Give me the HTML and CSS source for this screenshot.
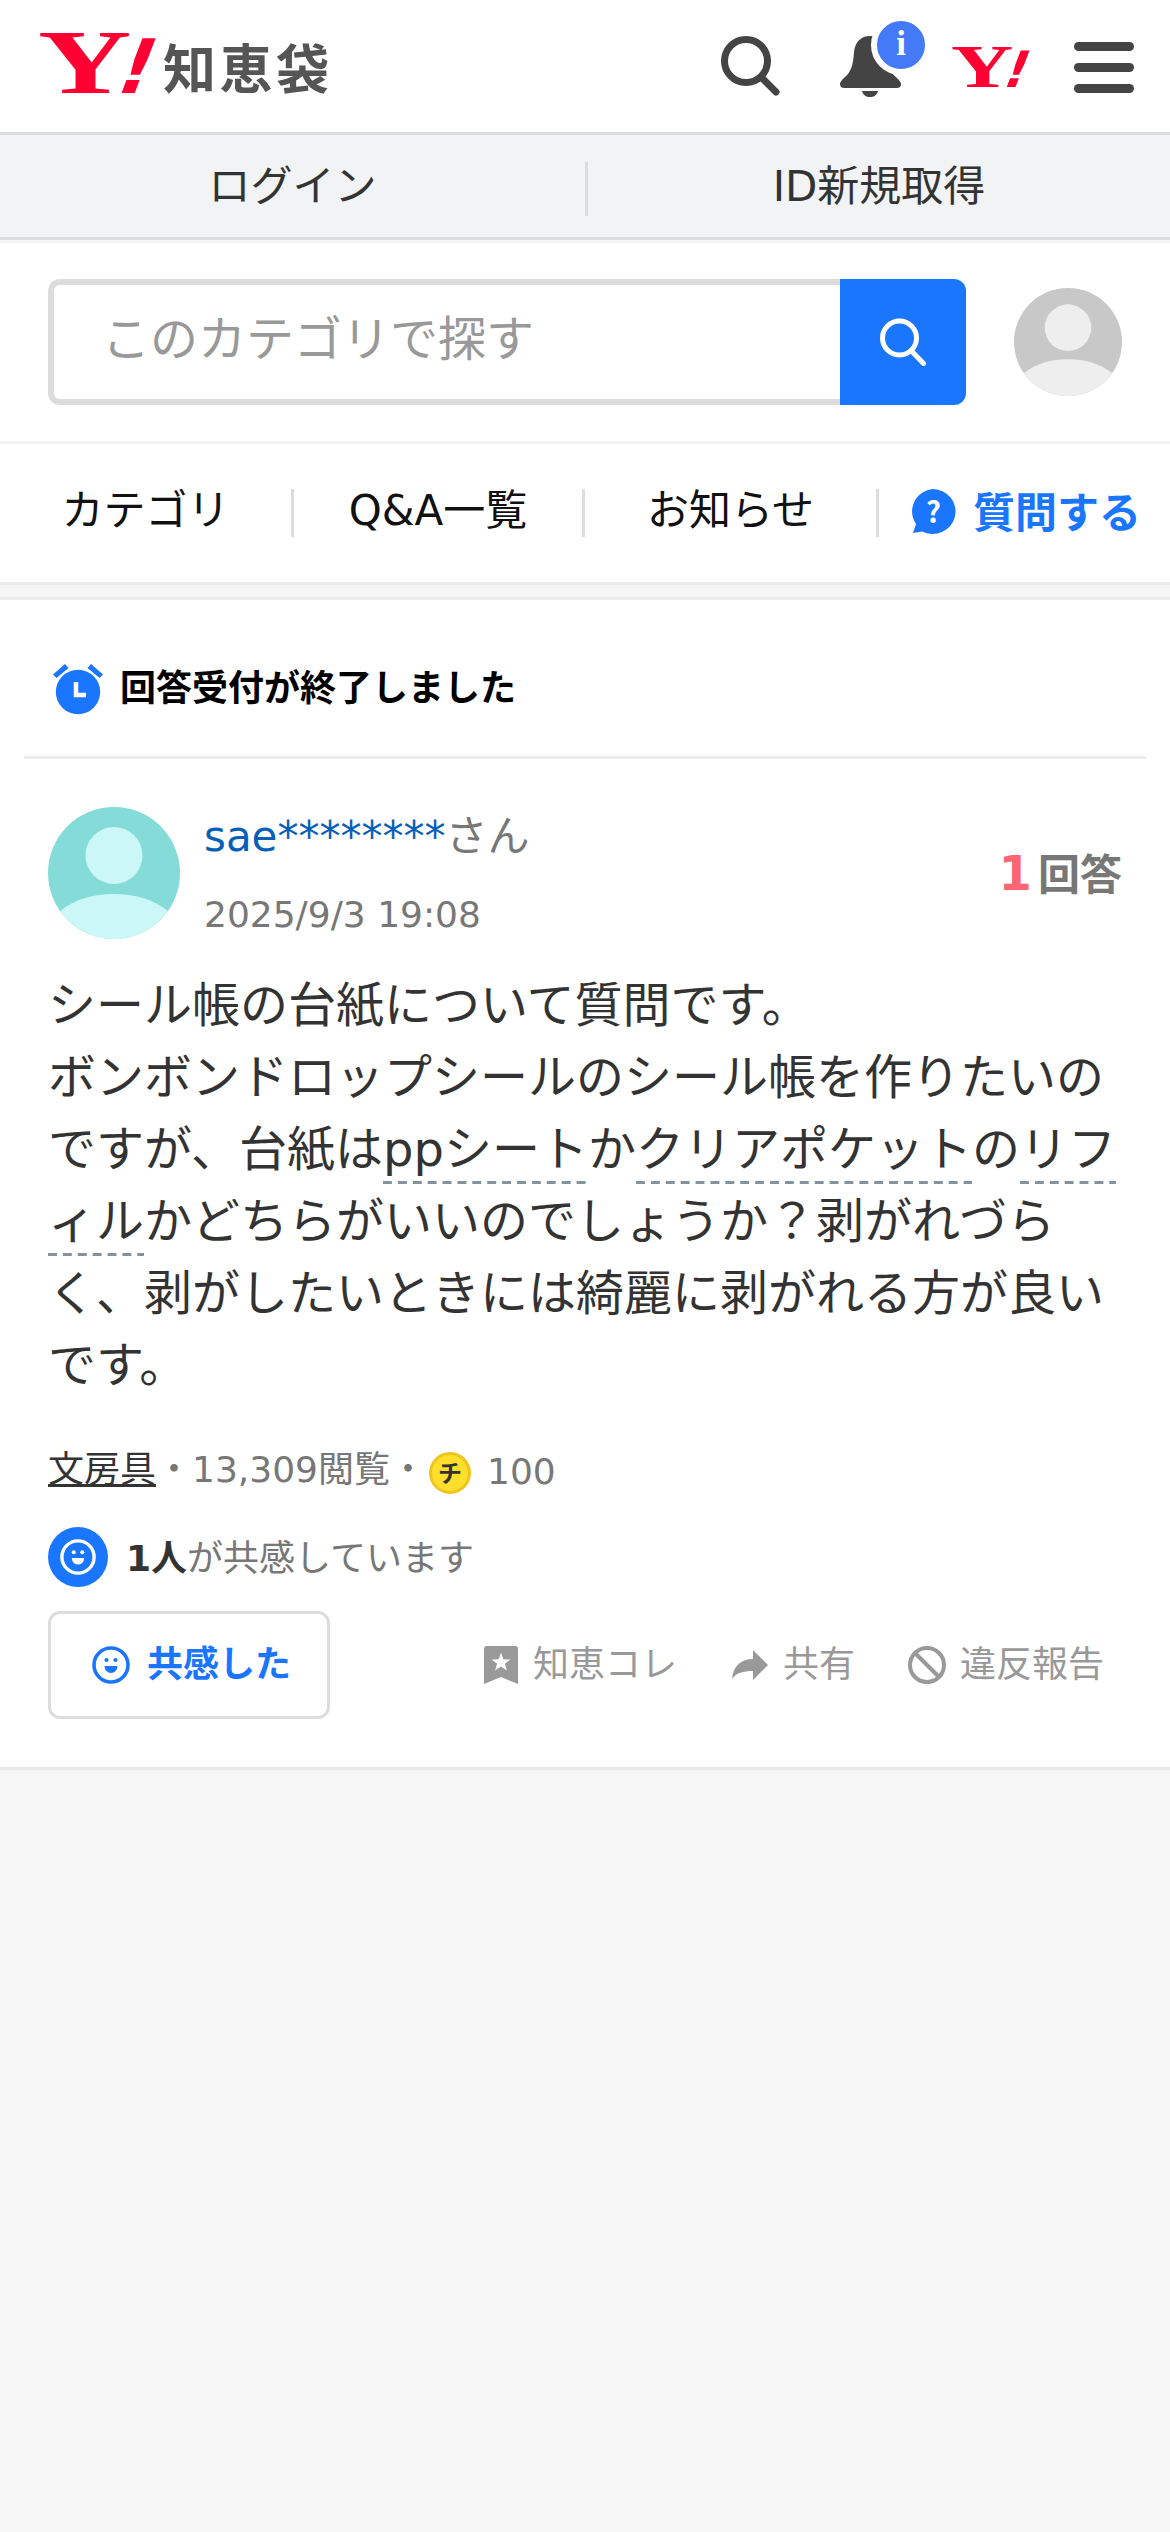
FILE: index.html
```html
<!DOCTYPE html>
<html lang="ja">
<head>
<meta charset="utf-8">
<title>シール帳の台紙について質問です。 - Yahoo!知恵袋</title>
<link rel="stylesheet" href="styles.css">
</head>
<body>
<header class="masthead">
  <a class="brand">
    <svg class="brand-y" width="120" height="66" viewBox="0 0 120 66"><text class="y-mark" transform="translate(0 63) scale(1.42 1)" font-size="91">Y</text><text class="y-bang" transform="translate(73 63) skewX(-21)" font-size="75">!</text></svg>
    <span class="brand-name">知恵袋</span>
  </a>
  <nav class="tools">
    <svg class="tool-search" width="62" height="62" viewBox="0 0 62 62" fill="none" stroke="#444" stroke-linecap="round"><circle cx="26" cy="26" r="21.5" stroke-width="7"/><path d="M42 43l14 14" stroke-width="7"/></svg>
    <span class="bell">
      <svg width="62" height="62" viewBox="0 0 62 62" fill="#444"><path d="M30 1c-9 0-15 6-16 16-1 14-3 20-10 26-4 4-4 5-4 6 0 3 2 4 4 4h53c2 0 4-1 4-4 0-1-1-3-4-6-7-6-10-12-11-26C45 7 39 1 30 1z"/><path d="M22 56h16c-1 4-4 6-8 6s-7-2-8-6z"/></svg>
      <span class="badge">i</span>
    </span>
    <svg class="tool-y" width="80" height="44" viewBox="0 0 120 66"><text class="y-mark" transform="translate(0 63) scale(1.42 1)" font-size="91">Y</text><text class="y-bang" transform="translate(73 63) skewX(-21)" font-size="75">!</text></svg>
    <span class="menu"><i></i><i></i><i></i></span>
  </nav>
</header>
<div class="account"><a>ログイン</a><a>ID新規取得</a></div>
<div class="search-row">
  <div class="search">
    <div class="field">このカテゴリで探す</div>
    <div class="go"><svg width="48" height="48" viewBox="0 0 48 48" fill="none" stroke="#fff" stroke-width="5" stroke-linecap="round"><circle cx="20.500" cy="20" r="17"/><path d="M33 33.500l11.500 12"/></svg></div>
  </div>
  <svg class="me" width="108" height="108" viewBox="0 0 132 132"><use href="#person"/></svg>
</div>
<nav class="tabs">
  <a>カテゴリ</a><a>Q&amp;A一覧</a><a>お知らせ</a>
  <a class="ask"><svg width="46" height="46" viewBox="0 0 46 46"><path d="M23 0a23 22.500 0 1 1-11 42.500L3 44l3-9A23 22.500 0 0 1 23 0z" fill="#1a75ff"/><text class="q" x="23.500" y="34" text-anchor="middle">?</text></svg>質問する</a>
</nav>
<main class="question">
  <div class="status">
    <svg width="52" height="52" viewBox="0 0 52 52" fill="#1a75ff"><path d="M13 0l3.500 4-12 10L1 10.500zM39 0l-3.500 4 12 10 3.500-3.500z"/><circle cx="26" cy="28" r="22.200"/><path d="M24 18v13h10" fill="none" stroke="#fff" stroke-width="4.500"/></svg>
    <h1>回答受付が終了しました</h1>
  </div>
  <article class="post">
    <div class="author">
      <svg class="avatar" width="132" height="132" viewBox="0 0 132 132"><g id="person"><circle class="bg" cx="66" cy="66" r="66"/><circle class="fg" cx="66" cy="48.500" r="28.500"/><path class="fg" d="M12 104C28 92 45 87 66 87s38 5 54 17A66 66 0 0 1 12 104z"/></g></svg>
      <div class="who">
        <div class="name"><a>sae********</a>さん</div>
        <time>2025/9/3 19:08</time>
      </div>
      <div class="count"><b>1</b>回答</div>
    </div>
    <p class="body">シール帳の台紙について質問です。<br>ボンボンドロップシールのシール帳を作りたいのですが、台紙は<a>ppシート</a>か<a>クリアポケット</a>の<a>リフィル</a>かどちらがいいのでしょうか？剥がれづらく、剥がしたいときには綺麗に剥がれる方が良いです。</p>
    <div class="meta"><a>文房具</a>・13,309閲覧・<span class="coin">チ</span><span class="points">100</span></div>
    <div class="empathy">
      <span class="face-disc"><svg width="36" height="36" viewBox="0 0 38 38"><use href="#face"/></svg></span>
      <span class="empathy-text"><b>1人</b>が共感しています</span>
    </div>
    <div class="actions">
      <button><svg width="38" height="38" viewBox="0 0 38 38"><g id="face"><circle cx="19" cy="19" r="17" fill="none" stroke="currentColor" stroke-width="3.600"/><circle cx="14.500" cy="14" r="2.100" fill="currentColor"/><circle cx="23.500" cy="14" r="2.100" fill="currentColor"/><path d="M12.500 20h13a6.500 7 0 0 1-13 0z" fill="currentColor"/></g></svg>共感した</button>
      <a class="save"><svg width="34" height="38" viewBox="0 0 34 38"><path d="M0 38V3q0-3 3-3h28q3 0 3 3v35l-17-7z" fill="currentColor"/><path d="M17 6.500l2.400 6.700 7.100.2-5.600 4.300 2 6.800-5.900-4-5.900 4 2-6.800-5.600-4.300 7.100-.2z" fill="#fff"/></svg>知恵コレ</a>
      <a class="share"><svg width="36" height="30" viewBox="0 0 36 30" fill="currentColor"><path d="M21 0l15 15-15 15v-9C11 21 4 23 0 29 1 17 8 9 21 9z"/></svg>共有</a>
      <a class="report"><svg width="38" height="38" viewBox="0 0 38 38" fill="none" stroke="currentColor" stroke-width="4"><circle cx="19" cy="19" r="17"/><path d="M7 7l24 24"/></svg>違反報告</a>
    </div>
  </article>
</main>
</body>
</html>
```
FILE: styles.css
```css
* { box-sizing: border-box; }
body {
  margin: 0;
  min-height: 2532px;
  background: #f6f6f6;
  color: #333;
  font-family: "DejaVu Sans", "Noto Sans CJK JP", sans-serif;
  font-size: 42px;
}
svg { display: block; flex: none; }
h1, p { margin: 0; }

.masthead {
  display: flex;
  justify-content: space-between;
  height: 135px;
  padding: 0 36px 0 38px;
  background: #fff;
  border-bottom: 3px solid #dadcde;
}
.brand { display: flex; align-items: flex-start; padding-top: 30px; }
.brand-y { overflow: visible; }
.brand-name {
  margin: 10px 0 0 5px;
  font: bold 53px/53px "Noto Sans CJK JP", sans-serif;
  letter-spacing: 3.5px;
  color: #555;
}
.y-mark { font-family: "Liberation Serif", serif; font-weight: bold; fill: #ff0033; }
.y-bang { font-family: "DejaVu Sans", sans-serif; font-weight: bold; fill: #ff0033; }
.tools { display: flex; align-items: flex-start; }
.tool-search { margin: 35px 58px 0 0; }
.bell { position: relative; margin: 35px 49px 0 0; }
.badge {
  position: absolute;
  left: 31px;
  top: -20px;
  width: 60px;
  height: 60px;
  border: 6px solid #fff;
  border-radius: 50%;
  background: #4479f7;
  color: #fff;
  font: bold 35px/45px "Liberation Serif", serif;
  text-align: center;
}
.tool-y { margin: 45px 43px 0 0; overflow: visible; }
.menu { display: flex; flex-direction: column; gap: 12px; padding-top: 42px; }
.menu i { width: 60px; height: 9px; border-radius: 5px; background: #444; }

.account {
  display: grid;
  grid-template-columns: 1fr 1fr;
  height: 105px;
  padding-top: 27px;
  background: #f1f3f5;
  border-bottom: 3px solid #dadcde;
  line-height: 49px;
  text-align: center;
}
.account a { height: 54px; }
.account a + a { border-left: 3px solid #dadcde; }

.search-row {
  display: flex;
  align-items: center;
  justify-content: space-between;
  height: 204px;
  padding: 0 48px;
  background: #fff;
  border-top: 3px solid #f4f4f4;
  border-bottom: 3px solid #f3f3f3;
}
.search { display: flex; width: 918px; height: 126px; }
.field {
  flex: 1;
  padding-left: 48px;
  border: 6px solid #dcdcdc;
  border-right: 0;
  border-radius: 12px 0 0 12px;
  color: #999;
  font-size: 48px;
  line-height: 109px;
}
.go {
  display: grid;
  place-items: center;
  width: 126px;
  background: #1a75ff;
  border-radius: 0 12px 12px 0;
}
.bg { fill: #84dbd7; }
.fg { fill: #ccf7f7; }
.me { filter: grayscale(1); }

.tabs {
  display: grid;
  grid-template-columns: 291px 291px 294px 1fr;
  height: 141px;
  padding-top: 45px;
  background: #fff;
  border-bottom: 3px solid #ebebeb;
  color: #111;
  text-align: center;
  line-height: 44px;
}
.tabs a { height: 48px; }
.tabs a + a { border-left: 3px solid #ddd; }
.tabs .ask {
  display: flex;
  gap: 17px;
  padding-left: 31px;
  color: #1a75ff;
  font-weight: bold;
  line-height: 49px;
}
.q { font: bold 29px "Noto Sans CJK JP", sans-serif; fill: #fff; }

.question {
  margin-top: 12px;
  background: #fff;
  border-top: 3px solid #ebebeb;
  border-bottom: 3px solid #e8e8e8;
  height: 1173px;
}
.status {
  display: flex;
  gap: 16px;
  height: 159px;
  margin: 0 24px;
  padding: 64px 0 0 28px;
  border-bottom: 3px solid #ebebeb;
}
.status h1 { font-size: 36px; line-height: 50px; color: #000; }
.post { padding: 48px 48px 0; }
.author { display: flex; height: 132px; }
.who { flex: 1; padding-left: 24px; color: #777; }
.name { line-height: 60px; }
.name a { color: #0660b8; }
time { display: block; margin-top: 24px; font-size: 36px; line-height: 48px; }
.count { color: #777; font-weight: bold; line-height: 132px; }
.count b { color: #ff6675; font-size: 48px; margin-right: 6px; }
.body {
  margin-top: 30px;
  font-size: 48px;
  line-height: 72px;
  word-break: break-all;
}
.body a {
  padding-bottom: 7px;
  background: linear-gradient(90deg, #84929c 9px, transparent 9px) left bottom / 14.9px 3px repeat-x;
  -webkit-box-decoration-break: clone;
  box-decoration-break: clone;
}
.meta {
  display: flex;
  margin-top: 45px;
  height: 54px;
  font-size: 36px;
  line-height: 48px;
  color: #777;
}
.meta a { color: #333; text-decoration: underline; }
.coin {
  width: 42px;
  height: 42px;
  margin: 6px 16px 0 3px;
  border: 3px solid #edc51c;
  border-radius: 50%;
  background: #ffdf2b;
  color: #333;
  font: bold 24px/34px "Noto Sans CJK JP", sans-serif;
  text-align: center;
}
.points { padding-top: 2px; }
.empathy {
  display: flex;
  align-items: center;
  gap: 18px;
  margin-top: 27px;
  height: 60px;
  font-size: 36px;
  line-height: 48px;
  color: #777;
}
.empathy-text { padding-top: 4px; }
.empathy b { color: #333; }
.face-disc {
  display: grid;
  place-items: center;
  width: 60px;
  height: 60px;
  border-radius: 50%;
  background: #1a75ff;
  color: #fff;
}
.actions {
  display: flex;
  align-items: center;
  height: 108px;
  margin-top: 24px;
  font-size: 36px;
  line-height: 48px;
  color: #999;
}
.actions a { display: flex; align-items: center; }
.actions button {
  display: flex;
  align-items: center;
  gap: 17px;
  width: 282px;
  height: 108px;
  padding: 0 0 0 41px;
  border: 3px solid #ddd;
  border-radius: 12px;
  background: #fff;
  color: #1a75ff;
  font: bold 36px/48px "DejaVu Sans", "Noto Sans CJK JP", sans-serif;
}
.save { margin-left: 154px; gap: 15px; }
.share { margin-left: 55px; gap: 15px; }
.report { margin-left: 53px; gap: 14px; }
```
